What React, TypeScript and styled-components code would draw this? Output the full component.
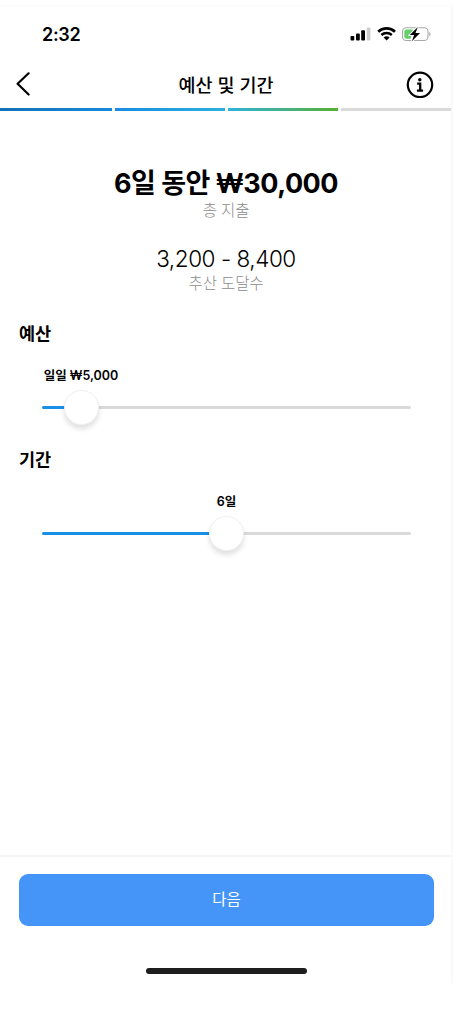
import React from "react";
import styled, { createGlobalStyle } from "styled-components";

const GlobalStyle = createGlobalStyle`
  * { box-sizing: border-box; }
  body {
    margin: 0;
    background: #fff;
    color: #000;
    font-family: Inter, "Noto Sans CJK KR", sans-serif;
  }
`;

const Screen = styled.div`
  display: flex;
  flex-direction: column;
  width: 453px;
  height: 978px;
  margin-top: 5px;
  border-top: 1px solid #fbfbfb;
  border-right: 2px solid #f9f9f9;
  background: #fff;
`;

const StatusBar = styled.header`
  display: flex;
  align-items: center;
  justify-content: space-between;
  height: 56px;
  padding: 0 19px 0 42px;
`;

const Time = styled.span`
  padding-top: 1px;
  font-size: 18px;
  font-weight: 600;
  line-height: 22px;
  letter-spacing: -0.3px;
`;

const NavBar = styled.nav`
  display: flex;
  align-items: center;
  justify-content: space-between;
  height: 46px;
  padding: 0 17px 0 16px;
`;

const IconButton = styled.button`
  display: flex;
  align-items: center;
  width: 28px;
  height: 28px;
  padding: 0;
  border: 0;
  background: none;
  color: #000;
`;

const NavTitle = styled.h1`
  margin: 0;
  padding: 0 0 0 2px;
  font-size: 18.5px;
  font-weight: 500;
  line-height: 24px;
`;

const Progress = styled.div`
  display: grid;
  grid-template-columns: 112px 110px 110px 1fr;
  gap: 3px;
  height: 3px;
`;

const Segment = styled.div<{ $fill: string }>`
  background: ${(p) => p.$fill};
`;

const Summary = styled.section`
  display: flex;
  flex-direction: column;
  align-items: center;
  padding: 54px 0 0 1px;
`;

const Total = styled.div`
  height: 36px;
  font-size: 27px;
  font-weight: 700;
  line-height: 37px;
  letter-spacing: -0.5px;
  white-space: nowrap;
`;

const Reach = styled.div`
  height: 30px;
  margin-top: 23px;
  font-size: 22.5px;
  font-weight: 300;
  line-height: 30px;
  letter-spacing: -0.45px;
  white-space: nowrap;
`;

const Caption = styled.div`
  height: 20px;
  font-size: 15.5px;
  font-weight: 300;
  line-height: 20px;
  letter-spacing: -0.1px;
  color: #8c8c8c;
`;

const Settings = styled.main`
  flex: 1;
  padding: 27px 19px 0;
`;

const Setting = styled.section`
  height: 126px;
`;

const SettingTitle = styled.h2`
  margin: 0;
  font-size: 17.5px;
  font-weight: 700;
  line-height: 26px;
`;

const SliderArea = styled.div`
  width: 369px;
  margin: 19px 0 0 23px;
`;

const ValueLabel = styled.div<{ $center: number }>`
  width: 120px;
  margin-left: ${(p) => p.$center - 60}px;
  font-size: 12.5px;
  font-weight: 600;
  line-height: 20px;
  letter-spacing: -0.05px;
  text-align: center;
  white-space: nowrap;
`;

const Track = styled.div<{ $value: number }>`
  display: flex;
  align-items: center;
  height: 3px;
  margin-top: 20px;
  border-radius: 2px;
  background: linear-gradient(to right, #1a8fe6 ${(p) => p.$value}px, #d9d9d9 ${(p) => p.$value}px);
`;

const Thumb = styled.div<{ $value: number }>`
  flex: none;
  width: 35px;
  height: 35px;
  margin-left: ${(p) => p.$value - 17.5}px;
  border: 1px solid #f1f1f1;
  border-radius: 50%;
  background: #fff;
  box-shadow: 0 4px 5px rgba(0, 0, 0, 0.12);
`;

const Footer = styled.footer`
  display: flex;
  flex-direction: column;
  align-items: center;
  height: 128px;
  padding: 17px 17px 0 19px;
  border-top: 2px solid #f6f6f6;
`;

const NextButton = styled.button`
  width: 100%;
  height: 51.5px;
  padding: 1px 0 0;
  border: 0;
  border-radius: 9px;
  background: #4495f7;
  color: #fff;
  font-family: inherit;
  font-size: 15.5px;
  font-weight: 400;
  line-height: 24px;
`;

const HomeIndicator = styled.div`
  width: 161px;
  height: 6px;
  margin-top: 42.5px;
  border-radius: 3px;
  background: #1e1e1e;
`;

function StatusIcons() {
  return (
    <svg width="82" height="16" viewBox="0 0 82 16" fill="none">
      <rect x="0.5" y="10" width="3.8" height="4.5" rx="1" fill="#000" />
      <rect x="6" y="7.5" width="3.8" height="7" rx="1" fill="#000" />
      <rect x="11.2" y="4.2" width="3.8" height="10.3" rx="1" fill="#000" />
      <rect x="16.8" y="1.4" width="3.6" height="13.1" rx="0.8" fill="#ccc" />
      <path d="M28.2 5.7a12.3 12.3 0 0 1 16.8 0" stroke="#000" strokeWidth="2.6" />
      <path d="M31.4 9a7.7 7.7 0 0 1 10.4 0" stroke="#000" strokeWidth="2.4" />
      <path d="M36.6 14.5 33.6 11.5a4.5 4.5 0 0 1 6 0Z" fill="#000" />
      <rect x="52.5" y="1.7" width="25.5" height="12.8" rx="3.8" stroke="#a8a8a8" strokeWidth="1.1" />
      <path d="M79.4 6v4.2c1.4-.5 1.4-3.7 0-4.2Z" fill="#999" />
      <path d="M56.3 3.4H63L60.5 12.8h-4.2a2 2 0 0 1-2-2V5.4a2 2 0 0 1 2-2Z" fill="#65cf6c" />
      <path d="M67.8 1 59.8 9h4.3l-2.2 6.3L70 7h-4.5Z" fill="#000" stroke="#fff" strokeWidth="1.8" paintOrder="stroke" />
    </svg>
  );
}

function BackIcon() {
  return (
    <svg width="15" height="26" viewBox="0 0 15 26" fill="none">
      <path d="M12.6 1.3 1.6 11.8 12.6 22.5" stroke="#000" strokeWidth="2.2" strokeLinecap="round" strokeLinejoin="round" />
    </svg>
  );
}

function InfoIcon() {
  return (
    <svg width="28" height="28" viewBox="0 0 28 28" fill="none">
      <circle cx="14" cy="13.8" r="12.2" stroke="#000" strokeWidth="2.2" />
      <circle cx="13.8" cy="8.7" r="1.7" fill="#000" />
      <path d="M11.2 12.7h3v7M10.9 19.6h6.2" stroke="#000" strokeWidth="2.3" />
    </svg>
  );
}

interface SliderProps {
  title: string;
  label: string;
  value: number;
  labelCenter: number;
}

function SliderSetting({ title, label, value, labelCenter }: SliderProps) {
  return (
    <Setting>
      <SettingTitle>{title}</SettingTitle>
      <SliderArea>
        <ValueLabel $center={labelCenter}>{label}</ValueLabel>
        <Track $value={value}>
          <Thumb $value={value} />
        </Track>
      </SliderArea>
    </Setting>
  );
}

export default function App() {
  return (
    <>
      <GlobalStyle />
      <Screen lang="ko">
        <StatusBar>
          <Time>2:32</Time>
          <StatusIcons />
        </StatusBar>
        <NavBar>
          <IconButton aria-label="뒤로">
            <BackIcon />
          </IconButton>
          <NavTitle>예산 및 기간</NavTitle>
          <IconButton aria-label="정보">
            <InfoIcon />
          </IconButton>
        </NavBar>
        <Progress>
          <Segment $fill="linear-gradient(to right, #1470b8, #1889dc)" />
          <Segment $fill="linear-gradient(to right, #1b8be0, #2bb0df)" />
          <Segment $fill="linear-gradient(to right, #2fb2dc, #45b08a 50%, #57b030)" />
          <Segment $fill="#dadada" />
        </Progress>
        <Summary>
          <Total>6일 동안 ₩30,000</Total>
          <Caption>총 지출</Caption>
          <Reach>3,200 - 8,400</Reach>
          <Caption>추산 도달수</Caption>
        </Summary>
        <Settings>
          <SliderSetting title="예산" label="일일 ₩5,000" value={39.5} labelCenter={39} />
          <SliderSetting title="기간" label="6일" value={184.5} labelCenter={184.5} />
        </Settings>
        <Footer>
          <NextButton>다음</NextButton>
          <HomeIndicator />
        </Footer>
      </Screen>
    </>
  );
}
